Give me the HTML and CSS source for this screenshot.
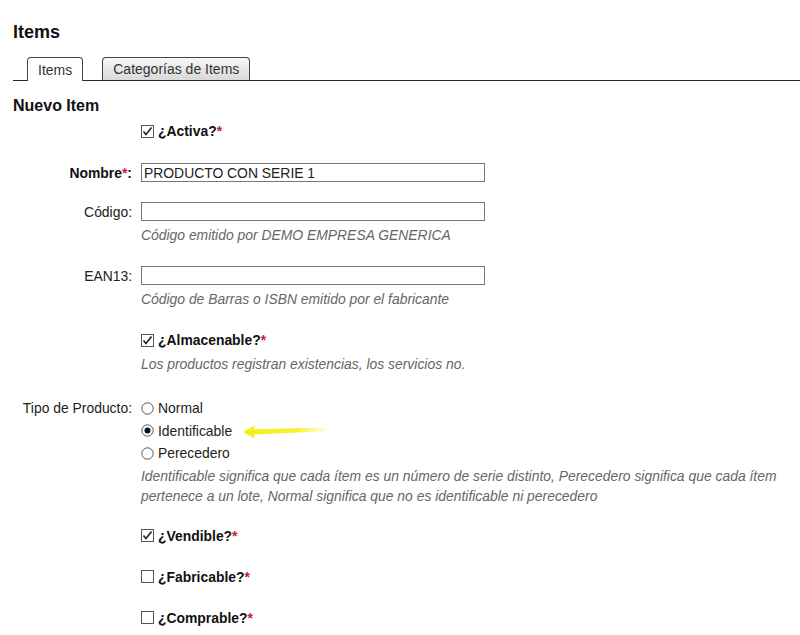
FILE: index.html
```html
<!DOCTYPE html>
<html lang="es">
<head>
    <meta charset="UTF-8">
    <title>Items</title>
    <link rel="stylesheet" href="styles.css">
</head>
<body>
    <h1>Items</h1>

    <div class="tabs">
        <span class="tab active">Items</span>
        <span class="tab">Categorías de Items</span>
    </div>

    <h2>Nuevo Item</h2>

    <form class="item-form">
        <div class="row gap-20">
            <span class="label"></span>
            <div class="field">
                <span class="check">
                    <svg class="box" width="13" height="13" viewBox="0 0 13 13"><rect x="0.5" y="0.5" width="12" height="12" fill="#fff" stroke="#555"/><path d="M2.5 6.5 L5 9.5 L10.5 2.5" fill="none" stroke="#222" stroke-width="1.6"/></svg>
                    <b>¿Activa?<span class="req">*</span></b>
                </span>
            </div>
        </div>

        <div class="row gap-17">
            <span class="label"><b>Nombre<span class="req">*</span>:</b></span>
            <div class="field">
                <input type="text" value="PRODUCTO CON SERIE 1">
            </div>
        </div>

        <div class="row gap-20">
            <span class="label">Código:</span>
            <div class="field">
                <input type="text">
                <p class="help">Código emitido por DEMO EMPRESA GENERICA</p>
            </div>
        </div>

        <div class="row gap-20">
            <span class="label">EAN13:</span>
            <div class="field">
                <input type="text">
                <p class="help">Código de Barras o ISBN emitido por el fabricante</p>
            </div>
        </div>

        <div class="row gap-23">
            <span class="label"></span>
            <div class="field">
                <span class="check">
                    <svg class="box" width="13" height="13" viewBox="0 0 13 13"><rect x="0.5" y="0.5" width="12" height="12" fill="#fff" stroke="#555"/><path d="M2.5 6.5 L5 9.5 L10.5 2.5" fill="none" stroke="#222" stroke-width="1.6"/></svg>
                    <b>¿Almacenable?<span class="req">*</span></b>
                </span>
                <p class="help spaced">Los productos registran existencias, los servicios no.</p>
            </div>
        </div>

        <div class="row">
            <span class="label">Tipo de Producto:</span>
            <div class="field">
                <span class="radio">
                    <svg width="13" height="13" viewBox="0 0 13 13"><circle cx="6.5" cy="6.5" r="5.7" fill="#fff" stroke="#555"/></svg>
                    Normal
                </span>
                <span class="radio marked">
                    <svg width="13" height="13" viewBox="0 0 13 13"><circle cx="6.5" cy="6.5" r="5.7" fill="#fff" stroke="#555"/><circle cx="6.5" cy="6.5" r="3" fill="#111"/></svg>
                    Identificable
                    <svg class="pointer" width="86" height="18" viewBox="0 0 86 18">
                        <defs>
                            <linearGradient id="fade" x1="0" x2="1" y1="0" y2="0">
                                <stop offset="0" stop-color="#f2f01c"/>
                                <stop offset="0.65" stop-color="#f6f22e"/>
                                <stop offset="1" stop-color="#f8f43a" stop-opacity="0.15"/>
                            </linearGradient>
                            <filter id="soft"><feGaussianBlur stdDeviation="0.5"/></filter>
                        </defs>
                        <path d="M1 10 L13 3 L12 7.2 L84 5.4 L84 9.2 L12 12.6 L13 16.5 Z" fill="url(#fade)" filter="url(#soft)"/>
                    </svg>
                </span>
                <span class="radio">
                    <svg width="13" height="13" viewBox="0 0 13 13"><circle cx="6.5" cy="6.5" r="5.7" fill="#fff" stroke="#555"/></svg>
                    Perecedero
                </span>
                <p class="help tight">Identificable significa que cada ítem es un número de serie distinto, Perecedero significa que cada ítem pertenece a un lote, Normal significa que no es identificable ni perecedero</p>
            </div>
        </div>

        <div class="row">
            <span class="label"></span>
            <div class="field">
                <span class="check">
                    <svg class="box" width="13" height="13" viewBox="0 0 13 13"><rect x="0.5" y="0.5" width="12" height="12" fill="#fff" stroke="#555"/><path d="M2.5 6.5 L5 9.5 L10.5 2.5" fill="none" stroke="#222" stroke-width="1.6"/></svg>
                    <b>¿Vendible?<span class="req">*</span></b>
                </span>
            </div>
        </div>

        <div class="row">
            <span class="label"></span>
            <div class="field">
                <span class="check">
                    <svg class="box" width="13" height="13" viewBox="0 0 13 13"><rect x="0.5" y="0.5" width="12" height="12" fill="#fff" stroke="#555"/></svg>
                    <b>¿Fabricable?<span class="req">*</span></b>
                </span>
            </div>
        </div>

        <div class="row">
            <span class="label"></span>
            <div class="field">
                <span class="check">
                    <svg class="box" width="13" height="13" viewBox="0 0 13 13"><rect x="0.5" y="0.5" width="12" height="12" fill="#fff" stroke="#555"/></svg>
                    <b>¿Comprable?<span class="req">*</span></b>
                </span>
            </div>
        </div>
    </form>
</body>
</html>
```

FILE: styles.css
```css
body {
    font-family: 'Liberation Sans', Arial, sans-serif;
    font-size: 13.9px;
    color: #222;
    margin: 0;
    padding: 22px 0 0 13px;
    background-color: #fff;
    overflow: hidden;
}
h1 {
    font-size: 18px;
    margin: 0 0 14px;
    color: #111;
}
h2 {
    font-size: 16px;
    margin: 16px 0 5px;
    color: #111;
}
.tabs {
    display: flex;
    gap: 19px;
    padding-left: 14px;
    border-bottom: 1px solid #2a2a2a;
    height: 23px;
    align-items: flex-end;
}
.tab {
    display: block;
    height: 22px;
    line-height: 23px;
    padding: 0 10px;
    border: 1px solid #444;
    border-bottom: none;
    border-radius: 4px 4px 0 0;
    background: linear-gradient(#f7f7f7, #d9d9d9);
    color: #333;
    font-size: 14px;
}
.tab.active {
    background: #fff;
    height: 23px;
    margin-bottom: -1px;
    line-height: 25px;
}
.item-form {
    margin: 0;
}
.row {
    display: grid;
    grid-template-columns: 119px 1fr;
    column-gap: 9px;
    margin-bottom: 19px;
}
.row.gap-17 { margin-bottom: 17px; }
.row.gap-20 { margin-bottom: 20px; }
.row.gap-23 { margin-bottom: 23px; }
.label {
    text-align: right;
    line-height: 22px;
    color: #222;
}
.label b {
    color: #111;
}
.field {
    display: flex;
    flex-direction: column;
    align-items: flex-start;
}
input[type=text] {
    width: 344px;
    height: 19px;
    margin: 1px 0 2px;
    padding: 0 2px;
    border: 1px solid #777;
    box-sizing: border-box;
    font-family: inherit;
    font-size: 13.9px;
    color: #222;
}
.check, .radio {
    display: flex;
    align-items: center;
    gap: 4px;
    line-height: 22px;
    position: relative;
}
.radio {
    line-height: 22.5px;
}
.check b {
    color: #111;
}
.req {
    color: #c8202a;
}
.help {
    margin: 2px 0 0;
    line-height: 20px;
    color: #666;
    font-style: italic;
    max-width: 650px;
}
.help.spaced {
    margin-top: 3px;
}
.help.tight {
    margin-top: 1px;
}
.pointer {
    position: absolute;
    left: 101px;
    top: 2px;
}
```
